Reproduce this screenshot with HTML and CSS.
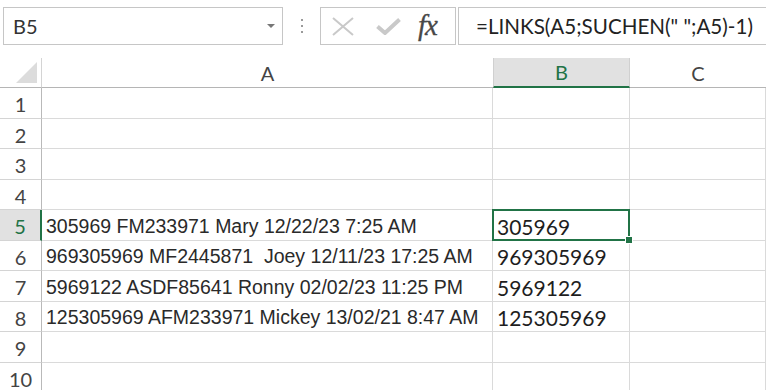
FILE: index.html
```html
<!DOCTYPE html>
<html>
<head>
    <title>Tabelle</title>
    <link rel="stylesheet" href="styles.css">
</head>
<body>
    <div class="toolbar">
        <div class="namebox">
            <span>B5</span>
            <span class="arrow"></span>
        </div>
        <div class="dots"><i></i><i></i><i></i></div>
        <div class="fxbox">
            <svg class="ico-x" width="22" height="19" viewBox="0 0 22 19">
                <path d="M1 1 L21 18 M21 1 L1 18" stroke="#c9c9c9" stroke-width="2" fill="none"/>
            </svg>
            <svg class="ico-ok" width="25" height="17" viewBox="0 0 25 17">
                <path d="M1.5 8.5 L9 15 L23.5 1.5" stroke="#c9c9c9" stroke-width="4" fill="none"/>
            </svg>
            <span class="fx">fx</span>
        </div>
        <div class="formula">=LINKS(A5;SUCHEN(" ";A5)-1)</div>
    </div>

    <div class="sheet">
        <div class="corner"><span class="tri"></span></div>
        <div class="colhead">A</div>
        <div class="colhead sel">B</div>
        <div class="colhead">C</div>

        <div class="rowhead">1</div><div class="cell"></div><div class="cell"></div><div class="cell"></div>
        <div class="rowhead">2</div><div class="cell"></div><div class="cell"></div><div class="cell"></div>
        <div class="rowhead">3</div><div class="cell"></div><div class="cell"></div><div class="cell"></div>
        <div class="rowhead">4</div><div class="cell"></div><div class="cell"></div><div class="cell"></div>

        <div class="rowhead sel">5</div>
        <div class="cell txt">305969 FM233971 Mary 12/22/23 7:25 AM</div>
        <div class="cell num active">305969</div>
        <div class="cell"></div>

        <div class="rowhead">6</div>
        <div class="cell txt">969305969 MF2445871&nbsp; Joey 12/11/23 17:25 AM</div>
        <div class="cell num">969305969</div>
        <div class="cell"></div>

        <div class="rowhead">7</div>
        <div class="cell txt">5969122 ASDF85641 Ronny 02/02/23 11:25 PM</div>
        <div class="cell num">5969122</div>
        <div class="cell"></div>

        <div class="rowhead">8</div>
        <div class="cell txt">125305969 AFM233971 Mickey 13/02/21 8:47 AM</div>
        <div class="cell num">125305969</div>
        <div class="cell"></div>

        <div class="rowhead">9</div><div class="cell"></div><div class="cell"></div><div class="cell"></div>
        <div class="rowhead">10</div><div class="cell"></div><div class="cell"></div><div class="cell"></div>
    </div>
</body>
</html>
```

FILE: styles.css
```css
body {
    margin: 0;
    background: #fff;
    font-family: Lato, "Liberation Sans", sans-serif;
    color: #222;
    overflow: hidden;
}

/* Leiste oben */
.toolbar {
    display: flex;
    align-items: stretch;
    height: 38px;
    padding-top: 7px;
    margin-bottom: 13px;
}

.namebox {
    box-sizing: border-box;
    width: 280px;
    margin-left: 3px;
    border: 1px solid #c6c6c6;
    display: flex;
    align-items: center;
    justify-content: space-between;
    padding: 0 7px 0 9px;
    font-size: 20px;
    color: #333;
}

.arrow {
    width: 0;
    height: 0;
    border-left: 4px solid transparent;
    border-right: 4px solid transparent;
    border-top: 4px solid #777;
}

.dots {
    width: 37px;
    display: flex;
    flex-direction: column;
    align-items: center;
    justify-content: center;
    gap: 4px;
}

.dots i {
    width: 2px;
    height: 2px;
    background: #9a9a9a;
}

.fxbox {
    box-sizing: border-box;
    width: 136px;
    border: 1px solid #c6c6c6;
    display: flex;
    align-items: center;
    padding-left: 11px;
}

.ico-x { margin-right: 22px; }
.ico-ok { margin-right: 17px; }

.fx {
    font-family: "Liberation Serif", serif;
    font-style: italic;
    font-size: 29px;
    color: #484848;
    letter-spacing: -1px;
    margin-top: -2px;
    -webkit-text-stroke: 0.3px #484848;
}

.formula {
    flex: 1;
    margin-left: 2px;
    border: 1px solid #c6c6c6;
    border-right: none;
    display: flex;
    align-items: center;
    padding-left: 17px;
    font-size: 20.6px;
    color: #222;
}

/* Tabelle */
.sheet {
    display: grid;
    grid-template-columns: 42px 451px 137px 1fr;
    grid-template-rows: 30px;
    grid-auto-rows: 30.5px;
}

.sheet > div {
    box-sizing: border-box;
}

.corner {
    border-right: 1px solid #d4d4d4;
    border-bottom: 1px solid #b5b5b5;
    position: relative;
}

.tri {
    position: absolute;
    right: 4px;
    bottom: 4px;
    width: 0;
    height: 0;
    border-left: 21px solid transparent;
    border-bottom: 21px solid #dcdcdc;
}

.colhead {
    border-bottom: 1px solid #b5b5b5;
    display: flex;
    align-items: center;
    justify-content: center;
    font-size: 20px;
    color: #444;
}

.colhead.sel {
    background: #e1e1e1;
    color: #217346;
    border-left: 1px solid #d0d0d0;
    border-right: 1px solid #d0d0d0;
    border-bottom: 2px solid #217346;
}

.rowhead {
    border-right: 1px solid #b9b9b9;
    border-bottom: 1px solid #d4d4d4;
    display: flex;
    align-items: center;
    justify-content: center;
    padding-top: 3px;
    font-size: 20px;
    color: #444;
}

.rowhead.sel {
    background: #e1e1e1;
    color: #217346;
    border-right: 2px solid #217346;
}

.cell {
    border-right: 1px solid #dadada;
    border-bottom: 1px solid #dadada;
    display: flex;
    align-items: center;
    padding: 3px 0 0 4px;
    white-space: nowrap;
    position: relative;
}

.txt {
    font-family: "Liberation Sans", Arial, sans-serif;
    font-size: 19.5px;
    color: #2a2a2a;
}

.num {
    font-size: 21px;
    color: #1e1e1e;
}

.active::after {
    content: "";
    position: absolute;
    left: -1px;
    top: -1px;
    right: -1px;
    bottom: -1px;
    border: 2px solid #217346;
}

.active::before {
    content: "";
    position: absolute;
    right: -4px;
    bottom: -4px;
    width: 6px;
    height: 6px;
    background: #217346;
    border: 1px solid #fff;
    z-index: 1;
}
```
